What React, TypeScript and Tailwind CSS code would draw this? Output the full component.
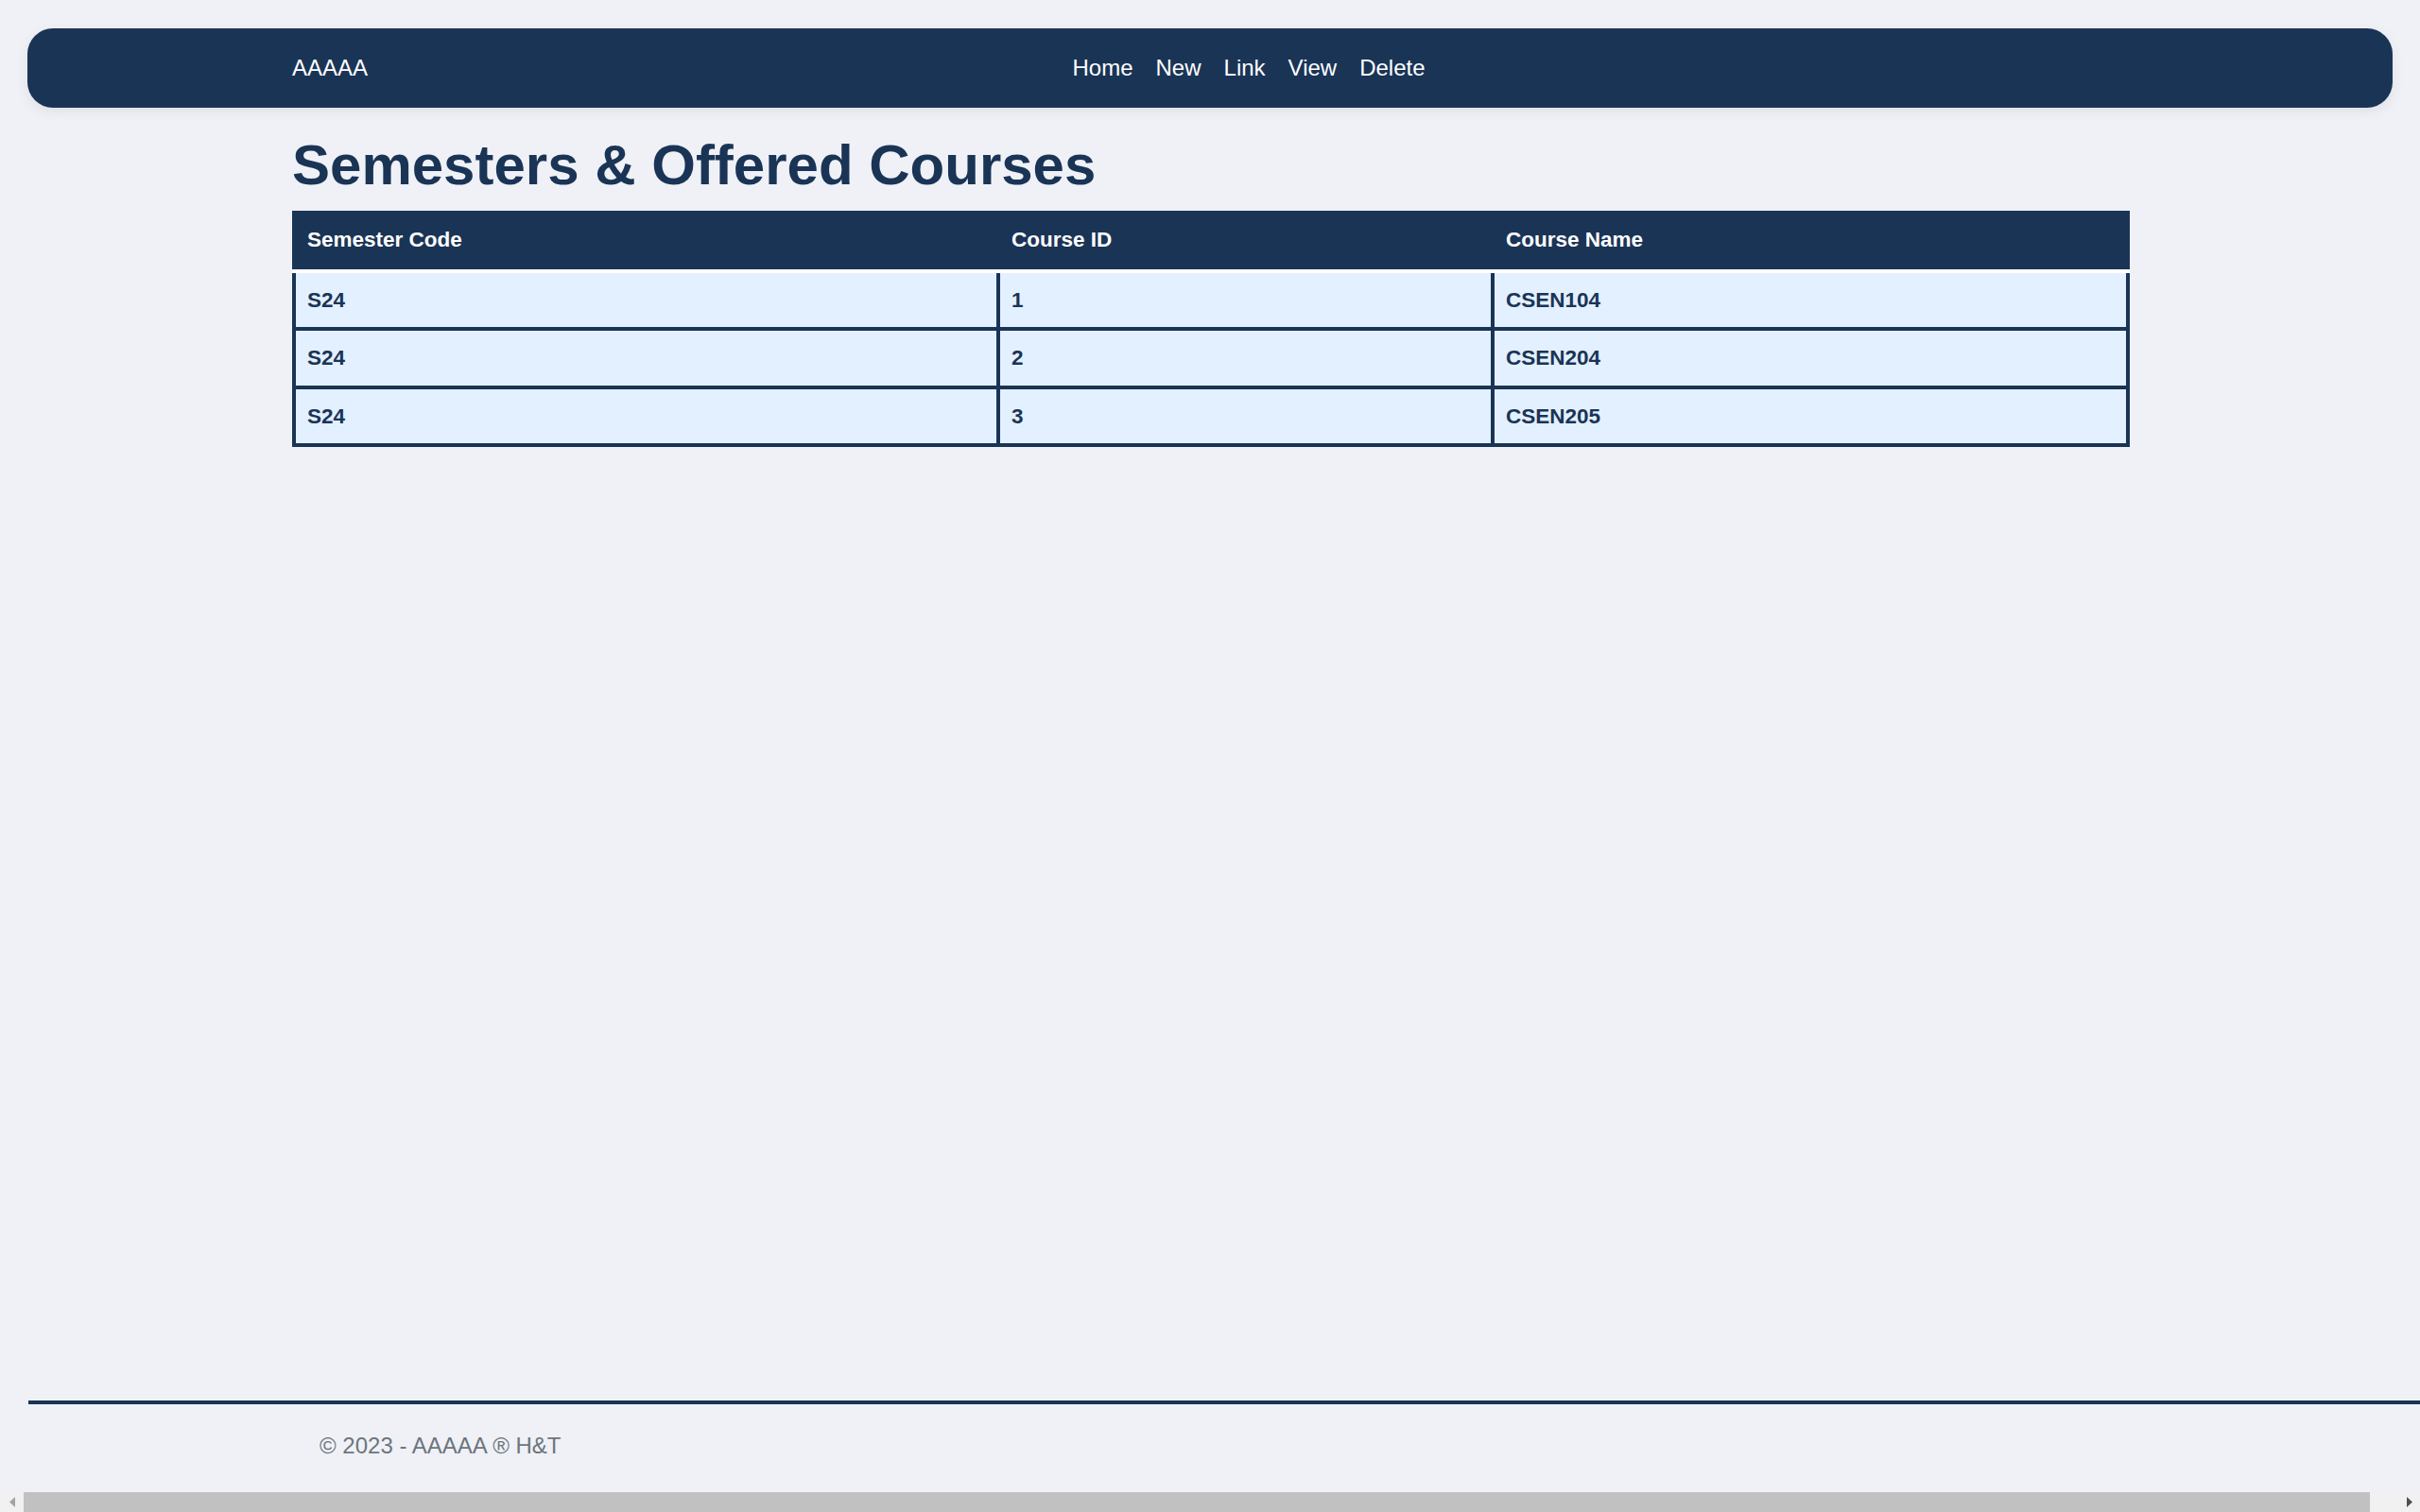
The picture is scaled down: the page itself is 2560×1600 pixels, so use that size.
import React from 'react';

const rows = [
  { code: 'S24', id: '1', name: 'CSEN104' },
  { code: 'S24', id: '2', name: 'CSEN204' },
  { code: 'S24', id: '3', name: 'CSEN205' },
];

const links = ['Home', 'New', 'Link', 'View', 'Delete'];

export default function App() {
  return (
    <div
      className="flex h-[1600px] flex-col overflow-hidden bg-[#eff1f6] text-[#1a3456]"
      style={{ fontFamily: '"Liberation Sans", Arial, sans-serif' }}
    >
      {/* navbar */}
      <nav className="mx-[29px] mt-[30px] flex h-[84px] shrink-0 items-center rounded-[27px] bg-[#1a3456] pl-[280px] pr-[302px] shadow-[0_4px_14px_rgba(0,0,0,0.07)]">
        <a href="#" className="mr-[24px] text-[24px] leading-none text-white">
          AAAAA
        </a>
        <ul className="flex flex-1 justify-center">
          {links.map((l) => (
            <li key={l}>
              <a href="#" className="block px-[12px] text-[24px] leading-none text-white">
                {l}
              </a>
            </li>
          ))}
        </ul>
      </nav>

      {/* main */}
      <main className="pl-[309px]">
        <h1 className="mt-[25px] mb-[12px] text-[60px] font-bold leading-[72px] text-[#1a3456]">
          Semesters &amp; Offered Courses
        </h1>

        <div className="w-[1944px] text-[22.5px] font-bold">
          <div className="grid grid-cols-[745px_523px_676px] bg-[#1a3456] text-white">
            <div className="flex h-[66px] items-center border-b-4 border-white pl-[16px]">Semester Code</div>
            <div className="flex h-[66px] items-center border-b-4 border-white pl-[16px]">Course ID</div>
            <div className="flex h-[66px] items-center border-b-4 border-white pl-[16px]">Course Name</div>
          </div>
          {rows.map((r) => (
            <div key={r.id} className="grid grid-cols-[745px_523px_676px] bg-[#e3f0ff] text-[#1a3456]">
              <div className="flex h-[61.4px] items-center border-b-4 border-l-4 border-[#1a3456] pl-[12px]">{r.code}</div>
              <div className="flex h-[61.4px] items-center border-b-4 border-l-4 border-[#1a3456] pl-[12px]">{r.id}</div>
              <div className="flex h-[61.4px] items-center border-b-4 border-l-4 border-r-4 border-[#1a3456] pl-[12px]">{r.name}</div>
            </div>
          ))}
        </div>
      </main>

      {/* footer */}
      <footer className="mt-auto ml-[30px] shrink-0 border-t-4 border-[#1a3456] pb-[4px] pl-[308px] text-[24px] leading-[88px] whitespace-nowrap text-[#6c757d]">
        © 2023 - AAAAA ® H&amp;T
      </footer>

      {/* horizontal scrollbar */}
      <div className="flex h-[22px] shrink-0 items-center bg-[#f1f1f1]">
        <div className="flex w-[25px] justify-center">
          <svg width="6" height="11" viewBox="0 0 6 11">
            <polygon points="6,0 0,5.5 6,11" fill="#a3a3a3" />
          </svg>
        </div>
        <div className="h-[21px] w-[2482px] bg-[#c1c1c1]" />
        <div className="flex flex-1 justify-end pr-[8px]">
          <svg width="6" height="11" viewBox="0 0 6 11">
            <polygon points="0,0 6,5.5 0,11" fill="#505050" />
          </svg>
        </div>
      </div>
    </div>
  );
}
